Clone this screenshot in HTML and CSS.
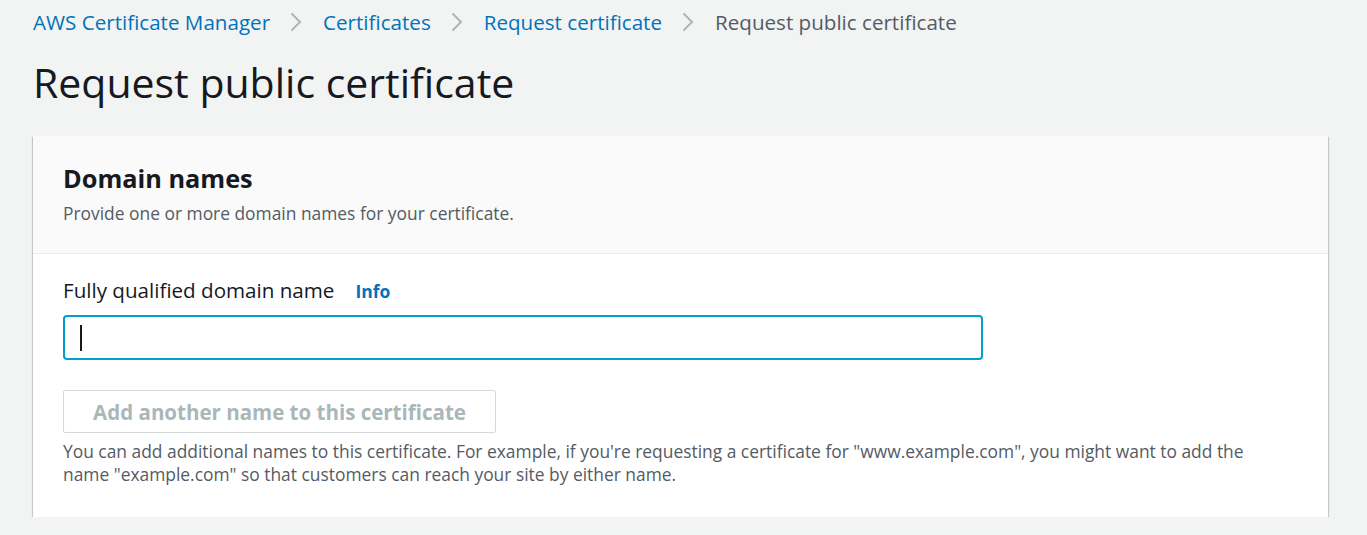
FILE: index.html
```html
<!DOCTYPE html>
<html lang="en">
<head>
<meta charset="utf-8">
<title>Request public certificate</title>
<link rel="stylesheet" href="styles.css">
</head>
<body>
<div class="page">
  <nav class="crumbs">
    <a class="crumb" href="#">AWS Certificate Manager</a>
    <svg class="sep" viewBox="0 0 12 20" width="12" height="20"><path d="M1.5 1.5 L10 10 L1.5 18.5" fill="none" stroke="#aab7b8" stroke-width="2"/></svg>
    <a class="crumb" href="#">Certificates</a>
    <svg class="sep" viewBox="0 0 12 20" width="12" height="20"><path d="M1.5 1.5 L10 10 L1.5 18.5" fill="none" stroke="#aab7b8" stroke-width="2"/></svg>
    <a class="crumb" href="#">Request certificate</a>
    <svg class="sep" viewBox="0 0 12 20" width="12" height="20"><path d="M1.5 1.5 L10 10 L1.5 18.5" fill="none" stroke="#aab7b8" stroke-width="2"/></svg>
    <span class="crumb current">Request public certificate</span>
  </nav>
  <h1 class="title">Request public certificate</h1>
  <section class="card">
    <header class="card-head">
      <h2 class="card-title">Domain names</h2>
      <p class="card-desc">Provide one or more domain names for your certificate.</p>
    </header>
    <div class="card-body">
      <div class="label-row">
        <span class="label">Fully qualified domain name</span>
        <a class="info" href="#">Info</a>
      </div>
      <div class="input"><span class="caret"></span></div>
      <button class="btn" disabled>Add another name to this certificate</button>
      <p class="hint">You can add additional names to this certificate. For example, if you're requesting a certificate for "www.example.com", you might want to add the name "example.com" so that customers can reach your site by either name.</p>
    </div>
  </section>
</div>
</body>
</html>
```
FILE: styles.css
```css
html, body {
  margin: 0;
  padding: 0;
  background: #f2f3f3;
}
body {
  font-family: "Open Sans", "Liberation Sans", sans-serif;
  color: #16191f;
}
.page {
  padding: 9px 39px 0 33px;
}
.crumbs {
  display: flex;
  align-items: center;
  height: 26px;
}
.crumb {
  font-size: 20.6px;
  color: #0073bb;
  text-decoration: none;
  white-space: nowrap;
}
.crumb.current {
  color: #545b64;
}
.sep {
  margin: 0 21px 0 20px;
  flex: none;
}
.title {
  margin: 23px 0 0 0;
  font-size: 41px;
  font-weight: 400;
  line-height: 48px;
  color: #16191f;
}
.card {
  margin-top: 30px;
  background: #fff;
  box-shadow: 0 1px 1px 0 rgba(0, 28, 36, 0.3), 1px 1px 1px 0 rgba(0, 28, 36, 0.15), -1px 1px 1px 0 rgba(0, 28, 36, 0.15);
}
.card-head {
  background: #fafafa;
  border-bottom: 1px solid #eaeded;
  padding: 27px 30px 29px 30px;
}
.card-title {
  margin: 0;
  font-size: 25.3px;
  font-weight: 700;
  line-height: 30px;
}
.card-desc {
  margin: 9px 0 0 0;
  font-size: 17.4px;
  line-height: 22px;
  color: #545b64;
}
.card-body {
  padding: 23px 30px 31px 30px;
}
.label-row {
  display: flex;
  align-items: baseline;
  gap: 21px;
  height: 26px;
  line-height: 26px;
}
.label {
  font-size: 20.6px;
  color: #16191f;
}
.info {
  font-size: 17.5px;
  font-weight: 700;
  color: #0073bb;
  text-decoration: none;
}
.input {
  margin-top: 12px;
  width: 901px;
  height: 41px;
  border: 2px solid #00a1c9;
  border-radius: 4px;
  background: #fff;
  display: flex;
  align-items: center;
  padding-left: 15px;
  box-sizing: content-box;
}
.caret {
  width: 2px;
  height: 26px;
  background: #16191f;
}
.btn {
  display: block;
  margin-top: 30px;
  width: 433px;
  height: 43px;
  border: 1px solid #d5dbdb;
  border-radius: 2px;
  background: #fff;
  color: #aab7b8;
  font-family: inherit;
  font-size: 20.5px;
  font-weight: 700;
  padding: 0;
}
.hint {
  margin: 7px 0 0 0;
  max-width: 1210px;
  font-size: 17.4px;
  line-height: 23px;
  color: #545b64;
}
```
